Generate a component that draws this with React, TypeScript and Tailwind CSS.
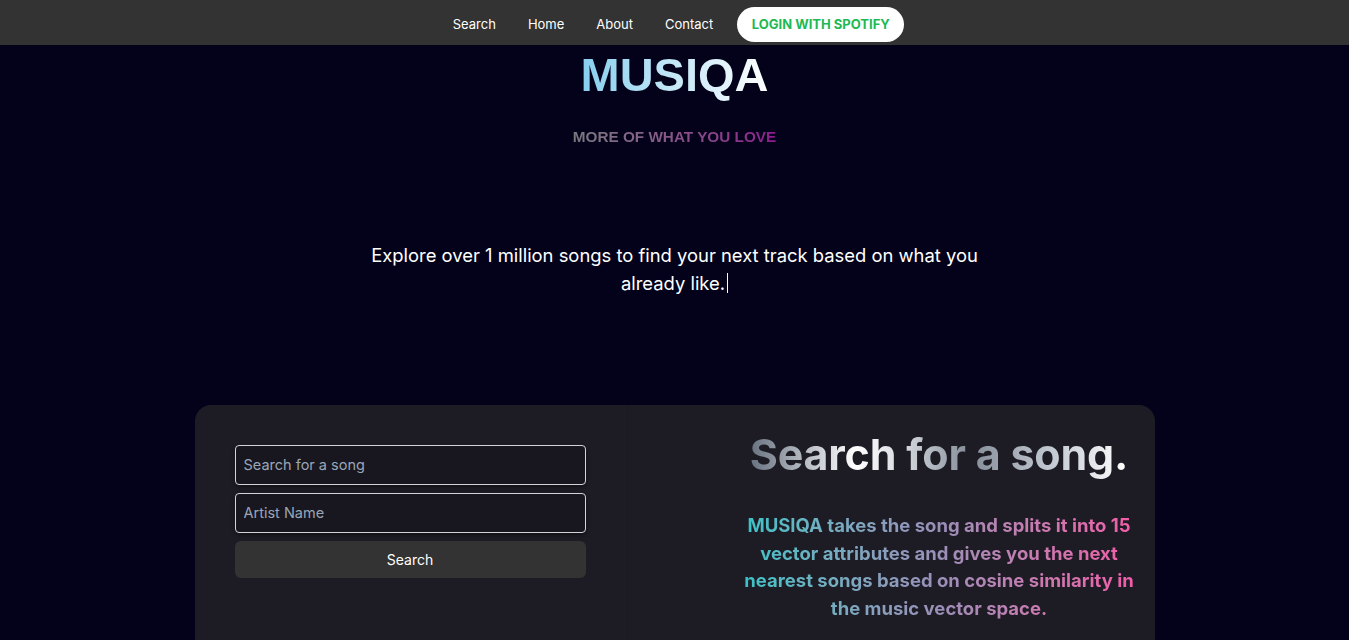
import React, { useState } from 'react';

const navLinks = ['Search', 'Home', 'About', 'Contact'];

export default function App() {
  const [song, setSong] = useState('');
  const [artist, setArtist] = useState('');

  const inputClass =
    'w-full h-[40px] rounded-[4px] border border-[#d4d4d8] bg-[#18171f] px-2 text-[14.5px] text-white placeholder:text-[#9aa6b8] outline-none shadow-[0_2px_4px_rgba(0,0,0,0.4)]';

  return (
    <div className="min-h-[640px] bg-[#03021a] font-['Inter',sans-serif] text-white overflow-hidden">
      <nav className="h-[45px] bg-[#333333] flex items-center justify-center">
        <div className="flex items-center gap-8 pl-[8px] mt-[4px]">
          {navLinks.map((link) => (
            <a key={link} href="#" className="text-[13px] text-white">
              {link}
            </a>
          ))}
          <button className="ml-[-8px] h-[35px] w-[167px] rounded-full bg-white text-[13px] font-bold text-[#1db954]">
            LOGIN WITH SPOTIFY
          </button>
        </div>
      </nav>

      <header className="flex flex-col items-center">
        <h1 className="mt-[3px] font-['Liberation_Sans',Arial,sans-serif] text-[47px] font-bold leading-[54px] bg-gradient-to-r from-[#86cfee] to-white bg-clip-text text-transparent">
          MUSIQA
        </h1>
        <p className="mt-[24px] font-['Liberation_Sans',Arial,sans-serif] text-[15.3px] font-bold bg-gradient-to-r from-[#7a7a80] to-[#8c1a8c] bg-clip-text text-transparent">
          MORE OF WHAT YOU LOVE
        </p>
        <p className="mt-[92px] w-[640px] text-center text-[18.4px] leading-[28px] text-white">
          Explore over 1 million songs to find your next track based on what you already like.
          <span className="inline-block w-[1px] h-[20px] bg-white align-[-3px] ml-[2px]"></span>
        </p>
      </header>

      <section className="mx-auto mt-[108px] w-[960px] h-[260px] rounded-[16px] bg-[#1d1c25] grid grid-cols-[433px_1fr] overflow-hidden">
        <div className="pl-[40px] pt-[40px] pr-[41px] flex flex-col gap-2 border-r border-[#1a1922]">
          <input
            className={inputClass}
            placeholder="Search for a song"
            value={song}
            onChange={(e) => setSong(e.target.value)}
          />
          <input
            className={inputClass}
            placeholder="Artist Name"
            value={artist}
            onChange={(e) => setArtist(e.target.value)}
          />
          <button className="h-[37px] w-full rounded-[6px] bg-[#333333] text-[14px] text-white">
            Search
          </button>
        </div>

        <div className="pl-[104px] pr-[8px] pt-[21px] flex flex-col items-center text-center">
          <h2 className="text-[43px] font-bold leading-[56px] tracking-[-0.2px] bg-[linear-gradient(90deg,#687280_0%,#ffffff_28%,#d8dce0_40%,#848c98_58%,#c4cad2_80%,#ffffff_100%)] bg-clip-text text-transparent">
            Search for a song.
          </h2>
          <p className="mt-[30px] w-[400px] text-[18.5px] font-bold leading-[27.7px] bg-gradient-to-r from-[#2ec5c8] via-[#9a8fb8] to-[#f35aa8] bg-clip-text text-transparent">
            MUSIQA takes the song and splits it into 15 vector attributes and gives you the next nearest songs based on cosine similarity in the music vector space.
          </p>
        </div>
      </section>
    </div>
  );
}
